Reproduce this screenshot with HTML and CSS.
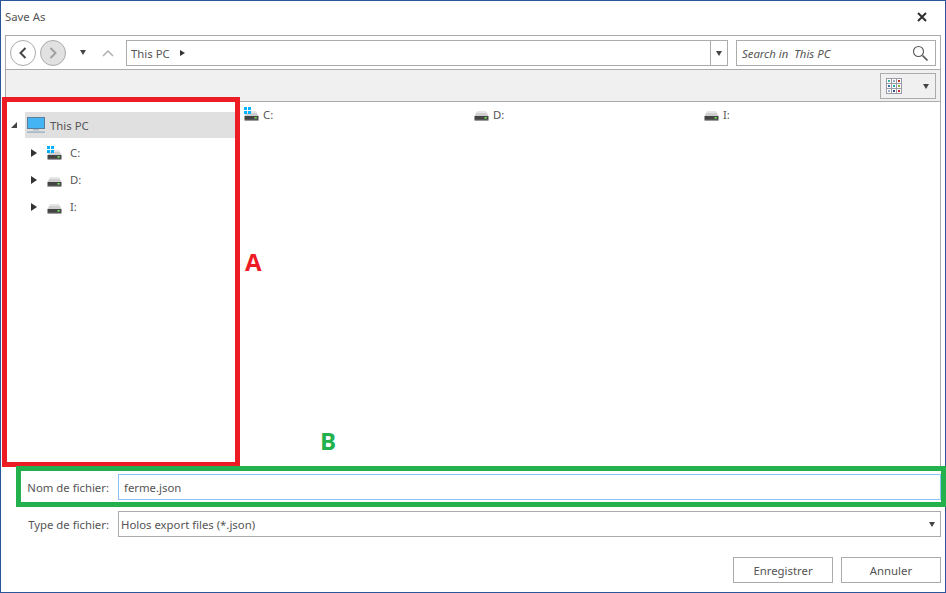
FILE: index.html
```html
<!DOCTYPE html>
<html lang="en">
<head>
  <meta charset="UTF-8" />
  <title>Save As</title>
  <link rel="stylesheet" href="styles.css">
</head>
<body>
  <svg class="defs" width="0" height="0">
    <symbol id="drive" viewBox="0 0 15 10">
      <path d="M3 0.5h9l2.5 4.5H0.5z" fill="#cfcfcf"/>
      <path d="M3 0.5h9l0.8 1.5H2.2z" fill="#e6e6e6"/>
      <path d="M0.5 5h14v3.8a0.7 0.7 0 0 1-0.7 0.7H1.2a0.7 0.7 0 0 1-0.7-0.7z" fill="#444"/>
      <rect x="0.5" y="8.8" width="14" height="0.9" fill="#999"/>
      <rect x="10.5" y="6" width="2.2" height="1.6" fill="#6fe85a"/>
    </symbol>
  </svg>
  <div class="window">
    <div class="titlebar">
      <span>Save As</span>
      <svg class="close" width="10" height="10" viewBox="0 0 10 10"><path d="M1 1l8 8M9 1l-8 8" stroke="#2f2f2f" stroke-width="2"/></svg>
    </div>

    <div class="panel">
      <div class="nav">
        <div class="round">
          <svg width="8" height="12" viewBox="0 0 8 12"><path d="M6.5 1L1.5 6l5 5" fill="none" stroke="#444" stroke-width="2"/></svg>
        </div>
        <div class="round off">
          <svg width="8" height="12" viewBox="0 0 8 12"><path d="M1.5 1l5 5-5 5" fill="none" stroke="#a0a0a0" stroke-width="2"/></svg>
        </div>
        <span class="arrow-down nav-drop"></span>
        <svg class="nav-up" width="12" height="7" viewBox="0 0 12 7"><path d="M1 6l5-5 5 5" fill="none" stroke="#b0b0b0" stroke-width="1.5"/></svg>
        <div class="address">
          <span class="path">This PC</span>
          <span class="arrow-right small"></span>
          <div class="address-drop"><span class="arrow-down"></span></div>
        </div>
        <div class="search">
          <span>Search in  This PC</span>
          <svg width="17" height="17" viewBox="0 0 17 17"><circle cx="6.5" cy="6.5" r="5" fill="none" stroke="#555" stroke-width="1.1"/><path d="M10.5 10.5l5 5" stroke="#555" stroke-width="1.7"/></svg>
        </div>
      </div>

      <div class="toolbar">
        <div class="view-btn">
          <svg width="16" height="16" viewBox="0 0 16 16">
            <rect x="0.5" y="0.5" width="15" height="15" fill="#fff" stroke="#9a9aa8"/>
            <path d="M5.5 0.5v15M10.5 0.5v15M0.5 5.5h15M0.5 10.5h15" stroke="#9a9aa8"/>
            <rect x="2" y="2" width="2" height="2" fill="#3fb3a8"/>
            <rect x="7" y="2" width="2" height="2" fill="#9ab0c8"/>
            <rect x="12" y="2" width="2" height="2" fill="#b8322a"/>
            <rect x="2" y="7" width="2" height="2" fill="#2f6fb0"/>
            <rect x="7" y="7" width="2" height="2" fill="#20b0b0"/>
            <rect x="12" y="7" width="2" height="2" fill="#8ab040"/>
            <rect x="2" y="12" width="2" height="2" fill="#9ab0c8"/>
            <rect x="7" y="12" width="2" height="2" fill="#2f4f90"/>
            <rect x="12" y="12" width="2" height="2" fill="#b8322a"/>
          </svg>
          <span class="arrow-down"></span>
        </div>
      </div>

      <div class="main">
        <div class="tree">
          <div class="tree-root">
            <span class="arrow-open"></span>
            <div class="root-row">
              <svg width="18" height="16" viewBox="0 0 18 16">
                <rect x="0.5" y="0.5" width="17" height="11" fill="#45b4f5" stroke="#5a7d9a"/>
                <rect x="6" y="12" width="6" height="1.5" fill="#a9bccb"/>
                <rect x="0" y="14.5" width="18" height="1.2" fill="#8fa7bc"/>
              </svg>
              <span>This PC</span>
            </div>
          </div>
          <div class="tree-item">
            <span class="arrow-right"></span>
            <span class="drive-icon">
              <svg class="flag" width="7" height="7" viewBox="0 0 7 7"><path d="M0 0h3v3H0zM4 0h3v3H4zM0 4h3v3H0zM4 4h3v3H4z" fill="#00b2ff"/></svg>
              <svg class="disk" width="15" height="10"><use href="#drive"/></svg>
            </span>
            <span class="tree-label">C:</span>
          </div>
          <div class="tree-item">
            <span class="arrow-right"></span>
            <span class="drive-icon"><svg class="disk" width="15" height="10"><use href="#drive"/></svg></span>
            <span class="tree-label">D:</span>
          </div>
          <div class="tree-item">
            <span class="arrow-right"></span>
            <span class="drive-icon"><svg class="disk" width="15" height="10"><use href="#drive"/></svg></span>
            <span class="tree-label">I:</span>
          </div>
        </div>

        <div class="files">
          <div class="file">
            <span class="drive-icon">
              <svg class="flag" width="7" height="7" viewBox="0 0 7 7"><path d="M0 0h3v3H0zM4 0h3v3H4zM0 4h3v3H0zM4 4h3v3H4z" fill="#00b2ff"/></svg>
              <svg class="disk" width="15" height="10"><use href="#drive"/></svg>
            </span>
            <span>C:</span>
          </div>
          <div class="file">
            <span class="drive-icon"><svg class="disk" width="15" height="10"><use href="#drive"/></svg></span>
            <span>D:</span>
          </div>
          <div class="file">
            <span class="drive-icon"><svg class="disk" width="15" height="10"><use href="#drive"/></svg></span>
            <span>I:</span>
          </div>
        </div>
      </div>
    </div>

    <div class="form">
      <div class="form-row">
        <label>Nom de fichier:</label>
        <div class="field active">ferme.json</div>
      </div>
      <div class="form-row">
        <label>Type de fichier:</label>
        <div class="field select">Holos export files (*.json)<span class="arrow-down"></span></div>
      </div>
    </div>

    <div class="buttons">
      <div class="btn">Enregistrer</div>
      <div class="btn">Annuler</div>
    </div>
  </div>

  <!-- annotations drawn over the screenshot -->
  <div class="mark mark-a"></div>
  <div class="mark mark-b"></div>
  <div class="letter letter-a">A</div>
  <div class="letter letter-b">B</div>
</body>
</html>
```

FILE: styles.css
```css
* {
  margin: 0;
  padding: 0;
  box-sizing: border-box;
}
body {
  font-family: "Noto Sans", "Open Sans", sans-serif;
  font-size: 11.35px;
  color: #555;
  background: #fff;
  width: 946px;
  height: 593px;
  overflow: hidden;
  position: relative;
}
.defs {
  position: absolute;
}
.window {
  width: 946px;
  height: 593px;
  border: 1px solid #2b579a;
  display: flex;
  flex-direction: column;
}
.titlebar {
  height: 34px;
  display: flex;
  align-items: center;
  justify-content: space-between;
  padding: 0 18px 3px 4px;
}
.panel {
  height: 432px;
  margin: 0 4px;
  border: 1px solid #ababab;
  border-bottom: none;
  display: flex;
  flex-direction: column;
}
.nav {
  height: 34px;
  flex: none;
  display: flex;
  align-items: flex-start;
  padding: 4px 0 0 4px;
  border-bottom: 1px solid #ababab;
}
.round {
  width: 26px;
  height: 26px;
  margin-right: 4px;
  border: 1px solid #ababab;
  border-radius: 50%;
  display: flex;
  align-items: center;
  justify-content: center;
}
.round.off {
  background: #e1e1e1;
}
.arrow-down {
  display: inline-block;
  width: 0;
  height: 0;
  border-left: 3.5px solid transparent;
  border-right: 3.5px solid transparent;
  border-top: 5px solid #444;
}
.arrow-right {
  display: inline-block;
  width: 0;
  height: 0;
  border-top: 4.5px solid transparent;
  border-bottom: 4.5px solid transparent;
  border-left: 6px solid #333;
}
.arrow-right.small {
  border-top-width: 3.5px;
  border-bottom-width: 3.5px;
  border-left-width: 5px;
  margin-left: 10px;
}
.arrow-open {
  width: 0;
  height: 0;
  border-left: 6px solid transparent;
  border-bottom: 6px solid #444;
}
.nav-drop {
  margin: 10px 0 0 10px;
}
.nav-up {
  margin: 10px 0 0 16px;
}
.address {
  width: 602px;
  height: 26px;
  margin-left: 12px;
  border: 1px solid #ababab;
  display: flex;
  align-items: center;
  padding-left: 4px;
}
.address-drop {
  margin-left: auto;
  width: 17px;
  height: 24px;
  border-left: 1px solid #ababab;
  display: flex;
  align-items: center;
  justify-content: center;
}
.search {
  width: 200px;
  height: 26px;
  margin-left: 8px;
  border: 1px solid #ababab;
  display: flex;
  align-items: center;
  justify-content: space-between;
  padding: 0 6px 0 5px;
  font-style: italic;
  white-space: pre;
}
.toolbar {
  height: 32px;
  flex: none;
  background: #f0f0f0;
  border-bottom: 1px solid #ababab;
  display: flex;
  justify-content: flex-end;
  padding: 3px 4px 0 0;
}
.view-btn {
  width: 56px;
  height: 26px;
  border: 1px solid #ababab;
  display: flex;
  align-items: center;
  justify-content: space-between;
  padding: 0 6px 0 5px;
}
.main {
  flex: 1;
  display: flex;
}
.tree {
  width: 234px;
  flex: none;
  padding-top: 10px;
}
.tree-root {
  display: flex;
  align-items: center;
  height: 26px;
  padding-left: 5px;
  margin-bottom: 1px;
}
.root-row {
  flex: 1;
  height: 26px;
  margin-left: 8px;
  background: #e0e0e0;
  display: flex;
  align-items: center;
  padding-left: 2px;
  gap: 5px;
}
.tree-item {
  height: 27px;
  display: flex;
  align-items: center;
  padding-left: 25px;
}
.drive-icon {
  position: relative;
  display: inline-block;
  width: 15px;
  height: 16px;
  flex: none;
}
.disk {
  position: absolute;
  left: 0;
  bottom: 1px;
}
.flag {
  position: absolute;
  left: 0;
  top: 1px;
  z-index: 1;
}
.tree-item .drive-icon {
  margin-left: 10px;
}
.tree-label {
  margin-left: 8px;
}
.files {
  flex: 1;
  display: flex;
  padding: 4px 0 0 4px;
  align-items: flex-start;
}
.file {
  width: 230px;
  display: flex;
  align-items: center;
  gap: 4px;
}
.form {
  padding: 7px 4px 0 0;
}
.form-row {
  display: flex;
  align-items: center;
  height: 26px;
  margin-bottom: 11px;
}
.form-row label {
  width: 117px;
  flex: none;
  text-align: right;
  padding-right: 9px;
}
.field {
  flex: 1;
  height: 26px;
  border: 1px solid #ababab;
  display: flex;
  align-items: center;
  justify-content: space-between;
  padding: 0 5px;
}
.field.active {
  border-color: #86c2f7;
}
.field.select {
  padding-left: 2px;
}
.buttons {
  display: flex;
  justify-content: flex-end;
  gap: 8px;
  padding: 9px 4px 0 0;
}
.btn {
  width: 100px;
  height: 26px;
  border: 1px solid #ababab;
  display: flex;
  align-items: center;
  justify-content: center;
}
.mark {
  position: absolute;
}
.mark-a {
  left: 2px;
  top: 97px;
  width: 238px;
  height: 370px;
  border: 5px solid #ed1c24;
}
.mark-b {
  left: 16px;
  top: 466px;
  width: 930px;
  height: 41px;
  border: 5px solid #22b14c;
}
.letter {
  position: absolute;
  font-family: "Open Sans", sans-serif;
  font-weight: 700;
  font-size: 24px;
  line-height: 1;
}
.letter-a {
  left: 245px;
  top: 250px;
  color: #ed1c24;
}
.letter-b {
  left: 320px;
  top: 429px;
  color: #22b14c;
}
```
